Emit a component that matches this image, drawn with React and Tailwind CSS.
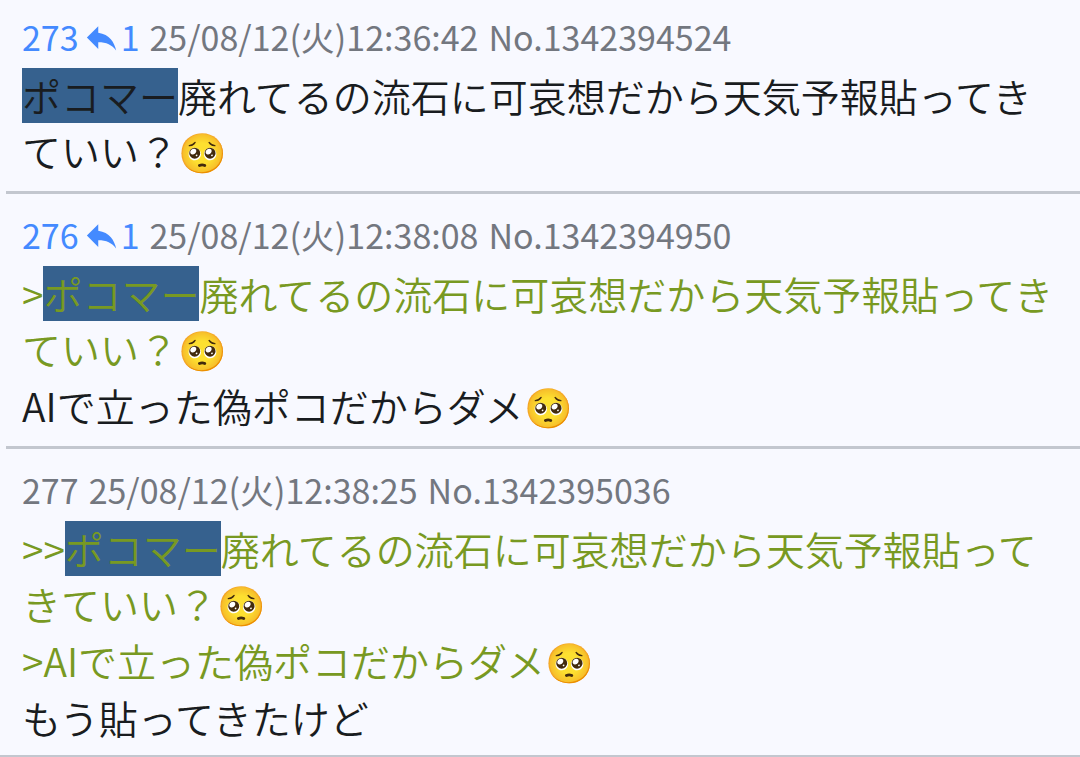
import { MdReply } from 'react-icons/md';

const KEYWORD = 'ポコマー';

const posts = [
  {
    index: 273,
    replies: 1,
    date: '25/08/12(火)12:36:42',
    no: '1342394524',
    lines: ['ポコマー廃れてるの流石に可哀想だから天気予報貼ってきていい？🥺'],
  },
  {
    index: 276,
    replies: 1,
    date: '25/08/12(火)12:38:08',
    no: '1342394950',
    lines: [
      '>ポコマー廃れてるの流石に可哀想だから天気予報貼ってきていい？🥺',
      'AIで立った偽ポコだからダメ🥺',
    ],
  },
  {
    index: 277,
    replies: 0,
    date: '25/08/12(火)12:38:25',
    no: '1342395036',
    lines: [
      '>>ポコマー廃れてるの流石に可哀想だから天気予報貼ってきていい？🥺',
      '>AIで立った偽ポコだからダメ🥺',
      'もう貼ってきたけど',
    ],
  },
];

function Line({ text }) {
  const quoted = text.startsWith('>');
  const [before, after] = text.split(KEYWORD);

  return (
    <p className={quoted ? 'text-[#789922]' : 'text-[#191c20]'}>
      {before}
      {after !== undefined && (
        <>
          <mark className="inline-block bg-[#36618e] text-inherit">{KEYWORD}</mark>
          {after}
        </>
      )}
    </p>
  );
}

function Post({ post }) {
  return (
    <article className="ml-[6px] border-b-[3px] border-[#c3c7cf] pt-4 pr-[22px] pb-[13px] pl-4 last:border-b-0 last:pb-[10px]">
      <header className="mb-[6px] flex items-center gap-[10px] text-[34px] leading-[50px] text-[#73777f]">
        {post.replies > 0 ? (
          <button type="button" className="flex items-center text-[#448aff]">
            {post.index}
            <MdReply className="ml-[3px] size-[39px]" />
            {post.replies}
          </button>
        ) : (
          <span>{post.index}</span>
        )}
        <time>{post.date}</time>
        <span>No.{post.no}</span>
      </header>
      <div className="space-y-[2px] text-[39px] leading-[55px] font-[350]">
        {post.lines.map((line) => (
          <Line key={line} text={line} />
        ))}
      </div>
    </article>
  );
}

export default function App() {
  return (
    <div lang="ja" className="min-h-screen overflow-hidden bg-[#f8f9ff] font-['Noto_Sans_CJK_JP',sans-serif]">
      <main className="-mt-1">
        {posts.map((post) => (
          <Post key={post.no} post={post} />
        ))}
      </main>
      <hr className="border-t-2 border-[#c3c7cf]" />
    </div>
  );
}
